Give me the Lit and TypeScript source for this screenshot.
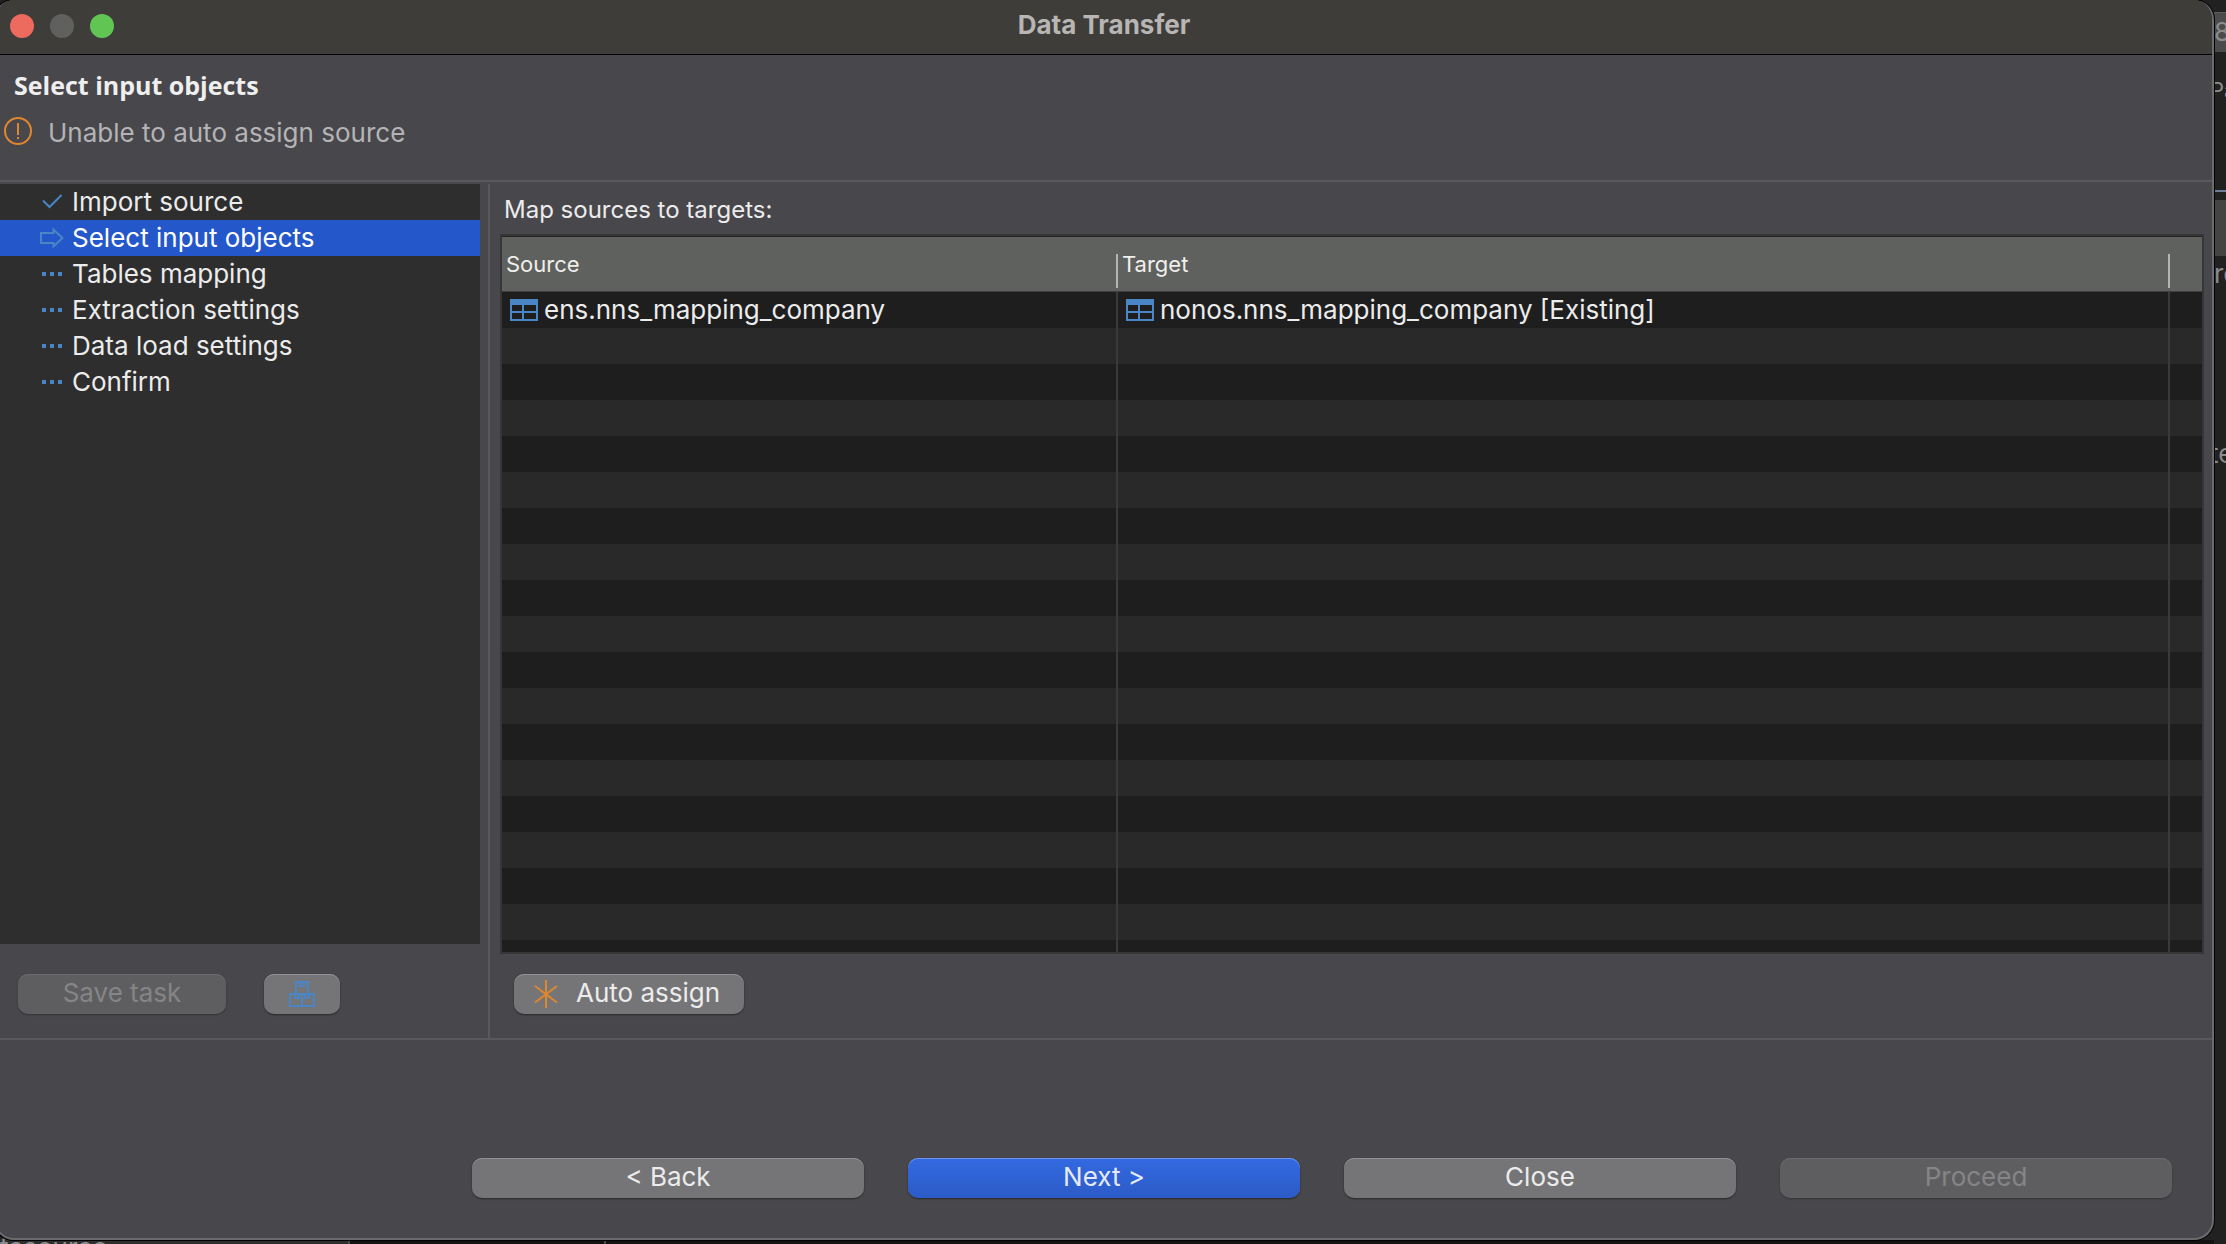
import { LitElement, html, css, svg } from "lit";
import { customElement, property, state } from "lit/decorators.js";
import { classMap } from "lit/directives/class-map.js";

type StepState = "done" | "current" | "pending";

interface Step {
  label: string;
  state: StepState;
}

interface Mapping {
  source: string;
  target: string;
}

const STEPS: Step[] = [
  { label: "Import source", state: "done" },
  { label: "Select input objects", state: "current" },
  { label: "Tables mapping", state: "pending" },
  { label: "Extraction settings", state: "pending" },
  { label: "Data load settings", state: "pending" },
  { label: "Confirm", state: "pending" },
];

const MAPPINGS: Mapping[] = [
  { source: "ens.nns_mapping_company", target: "nonos.nns_mapping_company [Existing]" },
];

const stepGlyphs = {
  done: svg`<path d="M3 16.5 9.5 23 21.5 11" fill="none" stroke="currentColor" stroke-width="2"/>`,
  current: svg`<path d="M1 13H13.5V9.5L22.5 18L13.5 26.5V23H1Z" fill="none" stroke="currentColor" stroke-width="2"/>`,
  pending: svg`<path d="M2 16h4v4h-4zM10 16h4v4h-4zM18 16h4v4h-4z" fill="currentColor"/>`,
};

const tableIcon = html`<svg class="table-icon" width="28" height="22" viewBox="0 0 28 22" aria-hidden="true">
  <path fill-rule="evenodd" fill="currentColor"
    d="M0 0H28V22H0ZM2 6V12H12V6ZM14 6V12H26V6ZM2 14V20H12V14ZM14 14V20H26V14Z"/>
</svg>`;

const warningIcon = html`<svg width="28" height="28" viewBox="0 0 28 28" aria-hidden="true">
  <circle cx="14" cy="14" r="13" fill="none" stroke="currentColor" stroke-width="2"/>
  <path d="M13 6h2v12h-2zM13 20h2v2h-2z" fill="currentColor"/>
</svg>`;

const boxesIcon = html`<svg width="26" height="26" viewBox="0 0 26 26" aria-hidden="true">
  <path fill="none" stroke="currentColor" stroke-width="2"
    d="M7 13V1H19V13M11 1V5H15V1M1 13H25V25H1ZM13 13V25M6 13V17H10V13M16 13V17H20V13"/>
</svg>`;

const asteriskIcon = html`<svg width="24" height="28" viewBox="0 0 24 28" aria-hidden="true">
  <path fill="none" stroke="currentColor" stroke-width="2" d="M12 0V28M1 6L23 22.5M23 6L1 22.5"/>
</svg>`;

const buttonStyles = css`
  button {
    font: inherit;
    color: inherit;
    border: 0;
    padding: 0;
    margin: 0;
    background: none;
  }
  .btn {
    height: 40px;
    box-sizing: border-box;
    padding-bottom: 2px;
    border-radius: 10px;
    display: flex;
    align-items: center;
    justify-content: center;
    color: #ececec;
    background: #757577;
    box-shadow: inset 0 1px 0 #929294, 0 1px 2px rgba(0, 0, 0, 0.45);
  }
  .btn:disabled {
    color: #858587;
    background: #5e5e60;
    box-shadow: inset 0 1px 0 #6c6c6e, 0 1px 2px rgba(0, 0, 0, 0.3);
  }
  .btn.primary {
    color: #e4eafb;
    background: linear-gradient(#3369e2, #2b5bc6);
    box-shadow: inset 0 1px 0 #6e96ec, 0 1px 2px rgba(0, 0, 0, 0.45);
  }
`;

@customElement("wizard-steps")
export class WizardSteps extends LitElement {
  @property({ attribute: false }) steps: Step[] = [];

  static styles = [
    buttonStyles,
    css`
      :host {
        display: block;
        background: #2e2e2e;
      }
      ol {
        list-style: none;
        margin: 0;
        padding: 0;
      }
      .step {
        width: 100%;
        height: 36px;
        padding-left: 44px;
        display: flex;
        align-items: center;
        gap: 8px;
        text-align: left;
        color: #ececec;
      }
      .step svg {
        flex: none;
        color: #4a86c5;
      }
      .step.current {
        background: #2457ca;
        color: #ffffff;
      }
    `,
  ];

  render() {
    return html`<ol>
      ${this.steps.map(
        (s) => html`<li>
          <button class=${classMap({ step: true, current: s.state === "current" })}>
            <svg width="24" height="36" viewBox="0 0 24 36" aria-hidden="true">${stepGlyphs[s.state]}</svg>
            <span>${s.label}</span>
          </button>
        </li>`
      )}
    </ol>`;
  }
}

@customElement("mapping-table")
export class MappingTable extends LitElement {
  @property({ attribute: false }) rows: Mapping[] = [];

  static styles = css`
    :host {
      display: block;
      overflow: hidden;
      border: 2px solid #363637;
      background: repeating-linear-gradient(#1e1e1e 0 36px, #292929 36px 72px) 0 56px no-repeat;
    }
    table {
      width: 100%;
      height: 100%;
      table-layout: fixed;
      border-collapse: separate;
      border-spacing: 0;
    }
    .col-source {
      width: 616px;
    }
    .col-rest {
      width: 32px;
    }
    th {
      height: 56px;
      box-sizing: border-box;
      padding: 0;
      border-top: 1px solid #242322;
      border-bottom: 1px solid #3d3e3d;
      background: #5f615f;
      color: #efefec;
      font-size: 22px;
      font-weight: 400;
      line-height: 34px;
      text-align: left;
    }
    .heading {
      display: block;
      height: 34px;
      margin-top: 14px;
      padding-left: 4px;
      border-right: 2px solid #b5b3b3;
    }
    .heading span {
      display: block;
      line-height: 20px;
    }
    td {
      height: 36px;
      padding: 0;
      box-sizing: border-box;
      border-right: 2px solid #3a3a3a;
      color: #ececec;
    }
    th:last-child,
    td:last-child {
      border-right: 0;
    }
    .filler td {
      height: auto;
    }
    .cell {
      display: flex;
      align-items: center;
      gap: 6px;
      height: 36px;
      padding-left: 8px;
      white-space: nowrap;
    }
    .table-icon {
      flex: none;
      color: #4a86c5;
    }
  `;

  render() {
    return html`<table>
      <colgroup>
        <col class="col-source" />
        <col />
        <col class="col-rest" />
      </colgroup>
      <thead>
        <tr>
          <th scope="col"><div class="heading"><span>Source</span></div></th>
          <th scope="col"><div class="heading"><span>Target</span></div></th>
          <th></th>
        </tr>
      </thead>
      <tbody>
        ${this.rows.map(
          (r) => html`<tr>
            <td><div class="cell">${tableIcon}<span>${r.source}</span></div></td>
            <td><div class="cell">${tableIcon}<span>${r.target}</span></div></td>
            <td></td>
          </tr>`
        )}
        <tr class="filler"><td></td><td></td><td></td></tr>
      </tbody>
    </table>`;
  }
}

@customElement("app-root")
export class AppRoot extends LitElement {
  @state() private steps = STEPS;
  @state() private mappings = MAPPINGS;

  static styles = [
    buttonStyles,
    css`
      :host {
        display: block;
        font-family: Inter, "Liberation Sans", sans-serif;
        font-size: 26px;
        line-height: 32px;
        color: #ececec;
      }
      .desktop {
        position: relative;
        box-sizing: border-box;
        height: 100vh;
        min-height: 800px;
        padding: 0 12px 4px 0;
        display: flex;
        overflow: hidden;
        background: #212121;
      }

      /* Application window lying behind the dialog */
      .behind {
        position: absolute;
        inset: 0;
        color: #8c8c8c;
      }
      .behind > * {
        position: absolute;
      }
      .edge {
        right: 0;
        width: 12px;
        overflow: hidden;
        white-space: nowrap;
      }
      .edge-button {
        top: 12px;
        height: 40px;
        line-height: 38px;
        background: #4b4b4b;
        border-top: 1px solid #5c5c5c;
        box-sizing: border-box;
      }
      .edge-tab {
        top: 74px;
        height: 32px;
        font-size: 22px;
        text-indent: -4px;
      }
      .edge-rule {
        top: 190px;
        height: 2px;
        background: #6d7c99;
      }
      .edge-bar {
        top: 200px;
        height: 56px;
        background: #444443;
      }
      .edge-row-a {
        top: 258px;
      }
      .edge-row-b {
        top: 438px;
        text-indent: -4px;
      }
      .bottom-edge {
        left: 0;
        right: 12px;
        bottom: 0;
        height: 4px;
        background: #141212;
      }
      .bottom-tab {
        left: 0;
        bottom: 0;
        width: 348px;
        height: 6px;
        overflow: hidden;
        background: #2e2e2e;
        border-right: 2px solid #4a4a4a;
        line-height: 20px;
      }
      .bottom-split {
        left: 604px;
        bottom: 0;
        width: 2px;
        height: 4px;
        background: #4a4a4a;
      }

      .window {
        position: relative;
        flex: 1;
        min-width: 0;
        margin-left: -6px;
        display: flex;
        flex-direction: column;
        overflow: hidden;
        border: 2px solid #6c6b6e;
        border-top: 0;
        border-radius: 20px;
        background: #48474b;
        box-shadow: 0 0 0 1px #000000;
      }
      .titlebar {
        height: 54px;
        padding-left: 14px;
        display: grid;
        grid-template-columns: 1fr auto 1fr;
        align-items: center;
        background: #3e3d3a;
        border-bottom: 1px solid #000000;
      }
      .lights {
        display: flex;
        gap: 16px;
        padding-bottom: 2px;
      }
      .light {
        width: 24px;
        height: 24px;
        border-radius: 50%;
        background: #60605e;
      }
      .light.close {
        background: #ed6a5e;
      }
      .light.zoom {
        background: #61c554;
      }
      .title {
        margin: 0;
        padding: 0 14px 4px 0;
        font-size: 26px;
        font-weight: 700;
        color: #b7b6b4;
      }
      .header {
        height: 125px;
        box-sizing: border-box;
        padding: 14px 8px 0;
      }
      .header h2 {
        margin: 0;
        padding-left: 10px;
        font-family: "Open Sans", "Noto Sans", sans-serif;
        font-size: 25px;
        font-weight: 700;
        line-height: 32px;
        color: #efefef;
      }
      .message {
        margin: 0;
        padding-top: 16px;
        display: flex;
        align-items: center;
        gap: 16px;
        color: #b4b4b6;
      }
      .message svg {
        color: #e0862e;
        margin-bottom: 4px;
      }
      .body {
        flex: 1;
        min-height: 0;
        display: grid;
        grid-template-columns: 484px 1fr;
        column-gap: 8px;
        padding-top: 2px;
        border-top: 2px solid #59585c;
        border-bottom: 2px solid #59585c;
      }
      .side,
      .main {
        display: flex;
        flex-direction: column;
        min-width: 0;
        min-height: 0;
      }
      .main {
        padding: 0 8px 0 10px;
        border-left: 2px solid #59585c;
      }
      wizard-steps,
      mapping-table {
        flex: 1;
        min-height: 0;
      }
      .side-actions {
        display: flex;
        gap: 38px;
        padding: 30px 0 24px 22px;
      }
      .save {
        width: 208px;
      }
      .config {
        width: 76px;
        padding-bottom: 0;
        color: #4a86c5;
      }
      .map-label {
        margin: 0;
        padding: 10px 0 8px 4px;
        font-size: 24px;
      }
      .main-actions {
        display: flex;
        padding: 20px 0 24px 14px;
      }
      .auto {
        width: 230px;
        justify-content: flex-start;
        padding-left: 20px;
        gap: 18px;
      }
      .auto svg {
        margin-top: 2px;
        color: #e0862e;
      }
      .footer {
        display: flex;
        justify-content: flex-end;
        gap: 44px;
        padding: 118px 40px 40px;
      }
      .footer .btn {
        flex: 0 1 392px;
      }
    `,
  ];

  render() {
    return html`<div class="desktop">
      <div class="behind" aria-hidden="true">
        <div class="edge edge-button">8</div>
        <div class="edge edge-tab">Pa</div>
        <div class="edge edge-rule"></div>
        <div class="edge edge-bar"></div>
        <div class="edge edge-row-a">re</div>
        <div class="edge edge-row-b">te</div>
        <div class="bottom-edge"></div>
        <div class="bottom-tab">tasource</div>
        <div class="bottom-split"></div>
      </div>

      <section class="window" role="dialog" aria-labelledby="title">
        <header class="titlebar">
          <div class="lights">
            <button class="light close" aria-label="Close window"></button>
            <button class="light" aria-label="Minimize window" disabled></button>
            <button class="light zoom" aria-label="Zoom window"></button>
          </div>
          <h1 class="title" id="title">Data Transfer</h1>
        </header>

        <div class="header">
          <h2>Select input objects</h2>
          <p class="message">${warningIcon}<span>Unable to auto assign source</span></p>
        </div>

        <div class="body">
          <nav class="side" aria-label="Steps">
            <wizard-steps .steps=${this.steps}></wizard-steps>
            <div class="side-actions">
              <button class="btn save" disabled>Save task</button>
              <button class="btn config" aria-label="Configure task">${boxesIcon}</button>
            </div>
          </nav>
          <main class="main">
            <p class="map-label">Map sources to targets:</p>
            <mapping-table .rows=${this.mappings}></mapping-table>
            <div class="main-actions">
              <button class="btn auto">${asteriskIcon}<span>Auto assign</span></button>
            </div>
          </main>
        </div>

        <footer class="footer">
          <button class="btn">&lt; Back</button>
          <button class="btn primary">Next &gt;</button>
          <button class="btn">Close</button>
          <button class="btn" disabled>Proceed</button>
        </footer>
      </section>
    </div>`;
  }
}
